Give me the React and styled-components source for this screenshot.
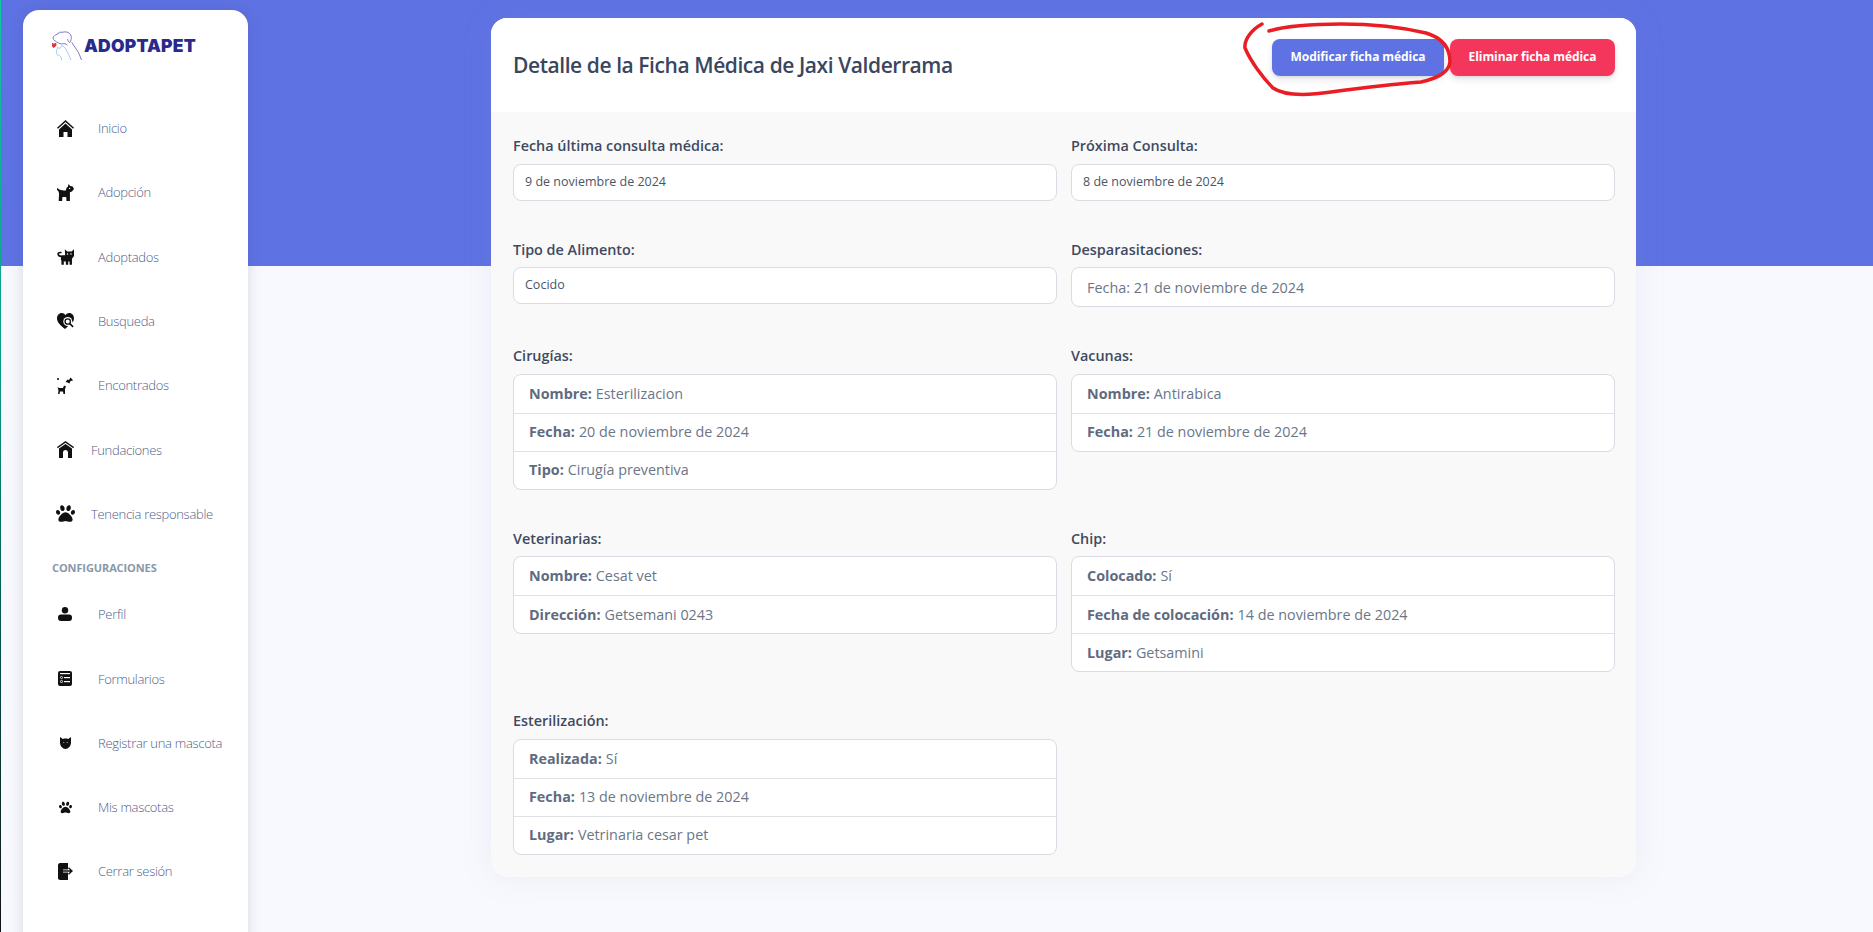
import styled, { createGlobalStyle } from "styled-components";
import { FaPaw } from "react-icons/fa";

const GlobalStyle = createGlobalStyle`
  html, body {
    margin: 0;
    height: 100%;
    overflow: hidden;
    background: #f8f9fe;
    font-family: "Open Sans", sans-serif;
  }
  * { box-sizing: border-box; }
`;

const Page = styled.div`
  position: relative;
  height: 932px;
  overflow: hidden;
  display: flex;
  align-items: flex-start;
  background: linear-gradient(#5e72e4 0, #5e72e4 266px, #f8f9fe 266px);
  border-left: 1px solid;
  border-image: linear-gradient(#10c9a0, #0a9a84 40%, #04504a 70%, #111) 1;
`;

const Sidebar = styled.aside`
  flex: 0 0 225px;
  height: 1000px;
  margin: 10px 0 0 22px;
  padding: 22px 0 0 29px;
  background: #fff;
  border-radius: 16px;
  box-shadow: 0 0 14px rgba(60, 70, 90, 0.18);
`;

const Logo = styled.div`
  display: flex;
  align-items: center;
  height: 30px;
  margin-bottom: 34px;
`;

const LogoText = styled.span`
  margin: -3px 0 0 1px;
  font-family: Inter, sans-serif;
  font-weight: 900;
  font-size: 17.5px;
  letter-spacing: 0.2px;
  color: #2a2a8c;
`;

const NavList = styled.nav`
  display: flex;
  flex-direction: column;
`;

const NavItem = styled.a`
  display: flex;
  align-items: center;
  height: 64.3px;
  font-size: 13px;
  font-weight: 300;
  letter-spacing: -0.3px;
  color: #50608a;
`;

const IconBox = styled.span`
  flex: 0 0 26px;
  display: flex;
  justify-content: center;
  color: #111;
  font-size: ${(p) => p.$size || 17}px;
`;

const NavLabel = styled.span`
  margin-left: ${(p) => (p.$tight ? 13 : 20)}px;
`;

const SectionTitle = styled.h6`
  margin: 11px 0 3px;
  height: 22px;
  line-height: 22px;
  font-size: 11px;
  font-weight: 700;
  color: #8898aa;
  letter-spacing: -0.1px;
`;

const Main = styled.main`
  flex: 0 0 1145px;
  margin: 18px 0 0 243px;
  background: #f9f9f9;
  border-radius: 16px;
  box-shadow: 0 0 32px rgba(136, 152, 170, 0.12);
`;

const CardHeader = styled.header`
  display: flex;
  align-items: center;
  justify-content: space-between;
  height: 94px;
  padding: 0 21px 0 22px;
  background: #fff;
  border-radius: 16px 16px 0 0;
`;

const Title = styled.h3`
  margin: 0;
  font-size: 21px;
  font-weight: 600;
  letter-spacing: -0.43px;
  color: #3a4560;
`;

const Actions = styled.div`
  display: flex;
  gap: 6px;
  margin-top: -15px;
`;

const Button = styled.button`
  height: 37px;
  width: ${(p) => p.$width}px;
  padding: 0 0 2px;
  border: none;
  border-radius: 8px;
  background: ${(p) => p.$bg};
  color: #fff;
  font-family: "Open Sans", sans-serif;
  font-size: 12px;
  font-weight: 700;
  letter-spacing: -0.08px;
  box-shadow: 0 4px 6px rgba(50, 50, 93, 0.11), 0 1px 3px rgba(0, 0, 0, 0.08);
`;

const CardBody = styled.div`
  display: grid;
  grid-template-columns: 544px 544px;
  column-gap: 14px;
  row-gap: 38px;
  align-items: start;
  padding: 23px 21px 22px 22px;
`;

const Group = styled.div`
  min-width: 0;
`;

const Label = styled.div`
  height: 21px;
  line-height: 21px;
  margin-bottom: 7.5px;
  font-size: 14.4px;
  font-weight: 600;
  color: #3f4a5f;
`;

const Field = styled.div`
  display: flex;
  align-items: center;
  height: ${(p) => (p.$large ? 40 : 37)}px;
  padding: 0 ${(p) => (p.$large ? 15 : 11)}px ${(p) => (p.$large ? 0 : 2)}px;
  background: #fff;
  border: 1px solid #d9dce3;
  border-radius: 8px;
  font-size: ${(p) => (p.$large ? 14.4 : 12.5)}px;
  color: ${(p) => (p.$large ? "#6b7688" : "#4a5568")};
`;

const List = styled.ul`
  margin: 0;
  padding: 0;
  list-style: none;
  background: #fff;
  border: 1px solid #d9dce3;
  border-radius: 8px;
`;

const ListRow = styled.li`
  height: 38px;
  display: flex;
  align-items: center;
  gap: 4px;
  padding: 0 15px 1px;
  font-size: 14.35px;
  color: #6b7688;
  & + & {
    border-top: 1px solid #dfe1e6;
  }
`;

const Key = styled.strong`
  font-weight: 700;
  color: #5f6b80;
`;

const Scribble = styled.svg`
  position: absolute;
  left: 0;
  top: 0;
  pointer-events: none;
`;

const LogoMark = () => (
  <svg width="31" height="32" viewBox="0 0 31 32" fill="none">
    <path
      d="M1.3 5.700 C3 4 5 3 6 3 C6 1.500 8 1 10 1.300 C13 0.500 16 0.800 17.500 2.500 C19.500 4 20 8 18 11.300 C17 12 16 10 15.500 8 M1.300 5.700 C0.800 8 2 9.700 3 9.700 C5 12 8 12.500 9.700 13 C12 12 14 13 15.500 14 M19.700 11.300 C22 15 25 19 26.300 21.300 C27.500 24 28.500 26 29.500 29"
      stroke="#5d58bb"
      strokeWidth="0.8"
    />
    <path
      d="M4.700 19.700 L5.500 16.500 L8 17.500 L9.700 14.700 C12 15.500 13 16.500 13.700 18 C15.500 21 17.500 25 19 29 M4.700 19.700 C4 21.500 4.200 23 6 24 C8 24.500 9.500 26 9.700 29"
      stroke="#86c3ec"
      strokeWidth="0.8"
    />
    <path d="M-1 13 C0 11.500 1.500 12 1.800 13 C2.200 12 4 11.500 4.500 13 C4.800 15 3 16 1.800 17 C0.600 16 -1.200 15 -1 13Z" fill="#d93a3a" />
  </svg>
);

const HomeIcon = () => (
  <svg width="17" height="17" viewBox="0 0 17 17" fill="#111">
    <path d="M8.500 0 L17 7.800 L16 8.800 L8.500 2 L1 8.800 L0 7.800Z" />
    <path d="M8.500 3.500 L15 9.500 L15 17 L10.500 17 L10.500 12 L6.500 12 L6.500 17 L2 17 L2 9.500Z" />
  </svg>
);

const DogIcon = () => (
  <svg width="17" height="17" viewBox="0 0 50 50" fill="#111">
    <path d="M0 12 L5 15 C8 18 14 19 20 19 L26 19 L28 11 L32 8 L34 0 L39 6 L46 7 L50 15 L44 22 L38 24 L38 50 L28 50 L27 38 L16 38 L15 50 L5 50 L6 30 C6 24 4 20 0 18Z" />
    <circle cx="37" cy="13" r="2" fill="#fff" />
  </svg>
);

const CatIcon = () => (
  <svg width="17" height="16" viewBox="0 0 50 46" fill="#111">
    <path d="M23 0 L30 7 L43 7 L50 0 L50 20 L44 28 L44 46 L37 46 L37 36 L33 36 L33 46 L26 46 L26 36 L20 36 L20 46 L13 46 L13 34 C11 30 11 27 12 24 C6 24 0 20 1 13 C2 8 8 6 14 8 L13 12 C9 11 6 12 6 14 C6 18 12 19 16 18 L24 18 Z" />
    <circle cx="31" cy="14" r="2.200" fill="#fff" />
    <circle cx="41" cy="14" r="2.200" fill="#fff" />
  </svg>
);

const SearchHeart = () => (
  <svg width="17" height="17" viewBox="0 0 19 19">
    <path d="M9 18 C5 15 0 11 0 6 C0 2 3 0 5.500 0 C7 0 8.500 1 9.500 2.500 C10.500 1 12 0 13.500 0 C16 0 19 2 19 6 C19 7 18.800 8 18.400 9 L9 18Z" fill="#111" />
    <circle cx="12" cy="9.500" r="5" fill="#fff" />
    <circle cx="12" cy="9.500" r="3" fill="none" stroke="#111" strokeWidth="1.500" />
    <path d="M14.300 11.800 L18 15.500" stroke="#111" strokeWidth="1.800" />
  </svg>
);

const FoundPets = () => (
  <svg width="16" height="17" viewBox="0 0 16 17" fill="#111">
    <rect x="0" y="1" width="2" height="2" fill="#444" />
    <path d="M8.500 5 L10.500 2.500 L12 3 L13.500 0.500 L15 2 L16 3.500 L13.500 4 L12.500 6.500 L10.500 5.500Z" />
    <path d="M0.500 10 L2 11 L6 11 L7 8.500 L9 9.500 L8 12 L8 17 L6.500 17 L6 14.500 L3 14.500 L2.500 17 L1 17 L1.500 13.500Z" />
  </svg>
);

const KennelIcon = () => (
  <svg width="17" height="17" viewBox="0 0 17 17" fill="#111">
    <path d="M8.500 0 L17 6 L16.300 7.200 L8.500 1.800 L0.700 7.200 L0 6Z" />
    <path d="M8.500 3 L15 7.500 L15 17 L11 17 L11 11.500 C11 10 10 9 8.500 9 C7 9 6 10 6 11.500 L6 17 L2 17 L2 7.500Z" />
  </svg>
);

const PersonIcon = () => (
  <svg width="14" height="14" viewBox="0 0 14 14" fill="#111">
    <circle cx="7" cy="3.200" r="3.200" />
    <rect x="0" y="7.500" width="14" height="6.500" rx="3" />
  </svg>
);

const FormIcon = () => (
  <svg width="14" height="15" viewBox="0 0 14 15">
    <rect width="14" height="15" rx="2" fill="#111" />
    <rect x="2" y="2" width="10" height="1.200" fill="#fff" />
    <circle cx="3.500" cy="6.500" r="1.100" fill="none" stroke="#fff" strokeWidth="0.800" />
    <rect x="6" y="6" width="6" height="1.200" fill="#fff" />
    <circle cx="3.500" cy="10.500" r="1.100" fill="none" stroke="#fff" strokeWidth="0.800" />
    <rect x="6" y="10" width="6" height="1.200" fill="#fff" />
  </svg>
);

// cat head
const CatHead = () => (
  <svg width="11" height="12" viewBox="0 0 12 13" fill="#111">
    <path d="M0 0 L3 2 C5 1.600 7 1.600 9 2 L12 0 L12 6 C12 10 9 13 6 13 C3 13 0 10 0 6Z" />
    <circle cx="4" cy="6" r="0.900" fill="#777" />
    <circle cx="8" cy="6" r="0.900" fill="#777" />
  </svg>
);

const ExitIcon = () => (
  <svg width="15" height="17" viewBox="0 0 15 17">
    <path d="M2 0 L10 0 L10 6.500 L5 6.500 L5 9.500 L10 9.500 L10 17 L2 17 C1 17 0 16 0 15 L0 2 C0 1 1 0 2 0Z" fill="#111" />
    <path d="M5 8 L13 8 M10.500 4.800 L14 8 L10.500 11.200" fill="none" stroke="#111" strokeWidth="1.400" />
  </svg>
);

const navTop = [
  { label: "Inicio", icon: <HomeIcon /> },
  { label: "Adopción", icon: <DogIcon /> },
  { label: "Adoptados", icon: <CatIcon /> },
  { label: "Busqueda", icon: <SearchHeart /> },
  { label: "Encontrados", icon: <FoundPets /> },
  { label: "Fundaciones", icon: <KennelIcon />, tight: true },
  { label: "Tenencia responsable", icon: <FaPaw />, size: 19, tight: true },
];

const navBottom = [
  { label: "Perfil", icon: <PersonIcon /> },
  { label: "Formularios", icon: <FormIcon /> },
  { label: "Registrar una mascota", icon: <CatHead /> },
  { label: "Mis mascotas", icon: <FaPaw />, size: 13 },
  { label: "Cerrar sesión", icon: <ExitIcon /> },
];

const sections = [
  { title: "Fecha última consulta médica:", value: "9 de noviembre de 2024" },
  { title: "Próxima Consulta:", value: "8 de noviembre de 2024" },
  { title: "Tipo de Alimento:", value: "Cocido" },
  { title: "Desparasitaciones:", value: "Fecha: 21 de noviembre de 2024", large: true },
  {
    title: "Cirugías:",
    rows: [
      ["Nombre:", "Esterilizacion"],
      ["Fecha:", "20 de noviembre de 2024"],
      ["Tipo:", "Cirugía preventiva"],
    ],
  },
  {
    title: "Vacunas:",
    rows: [
      ["Nombre:", "Antirabica"],
      ["Fecha:", "21 de noviembre de 2024"],
    ],
  },
  {
    title: "Veterinarias:",
    rows: [
      ["Nombre:", "Cesat vet"],
      ["Dirección:", "Getsemani 0243"],
    ],
  },
  {
    title: "Chip:",
    rows: [
      ["Colocado:", "Sí"],
      ["Fecha de colocación:", "14 de noviembre de 2024"],
      ["Lugar:", "Getsamini"],
    ],
  },
  {
    title: "Esterilización:",
    rows: [
      ["Realizada:", "Sí"],
      ["Fecha:", "13 de noviembre de 2024"],
      ["Lugar:", "Vetrinaria cesar pet"],
    ],
  },
];

const renderNav = (items) =>
  items.map((item) => (
    <NavItem key={item.label}>
      <IconBox $size={item.size}>{item.icon}</IconBox>
      <NavLabel $tight={item.tight}>{item.label}</NavLabel>
    </NavItem>
  ));

const App = () => {
  return (
    <Page>
      <GlobalStyle />
      <Sidebar>
        <Logo>
          <LogoMark />
          <LogoText>ADOPTAPET</LogoText>
        </Logo>
        <NavList>
          {renderNav(navTop)}
          <SectionTitle>CONFIGURACIONES</SectionTitle>
          {renderNav(navBottom)}
        </NavList>
      </Sidebar>
      <Main>
        <CardHeader>
          <Title>Detalle de la Ficha Médica de Jaxi Valderrama</Title>
          <Actions>
            <Button $width={172} $bg="#5e72e4">Modificar ficha médica</Button>
            <Button $width={165} $bg="#f5365c">Eliminar ficha médica</Button>
          </Actions>
        </CardHeader>
        <CardBody>
          {sections.map((s) => (
            <Group key={s.title}>
              <Label>{s.title}</Label>
              {s.rows ? (
                <List>
                  {s.rows.map(([k, v]) => (
                    <ListRow key={k}>
                      <Key>{k}</Key> {v}
                    </ListRow>
                  ))}
                </List>
              ) : (
                <Field $large={s.large}>{s.value}</Field>
              )}
            </Group>
          ))}
        </CardBody>
      </Main>
      <Scribble width="1873" height="932" fill="none">
        <path
          d="M1261 24 C1250 30 1243 40 1244 48 C1250 62 1262 78 1272 88 C1285 97 1310 95 1330 92 C1360 88 1395 84 1420 82 C1438 78 1448 72 1449 62 C1449 48 1442 38 1425 33 C1400 27 1370 24 1340 24 C1310 24 1285 26 1268 31"
          stroke="#ea1c24"
          strokeWidth="3.5"
          strokeLinecap="round"
        />
      </Scribble>
    </Page>
  );
};

export default App;
